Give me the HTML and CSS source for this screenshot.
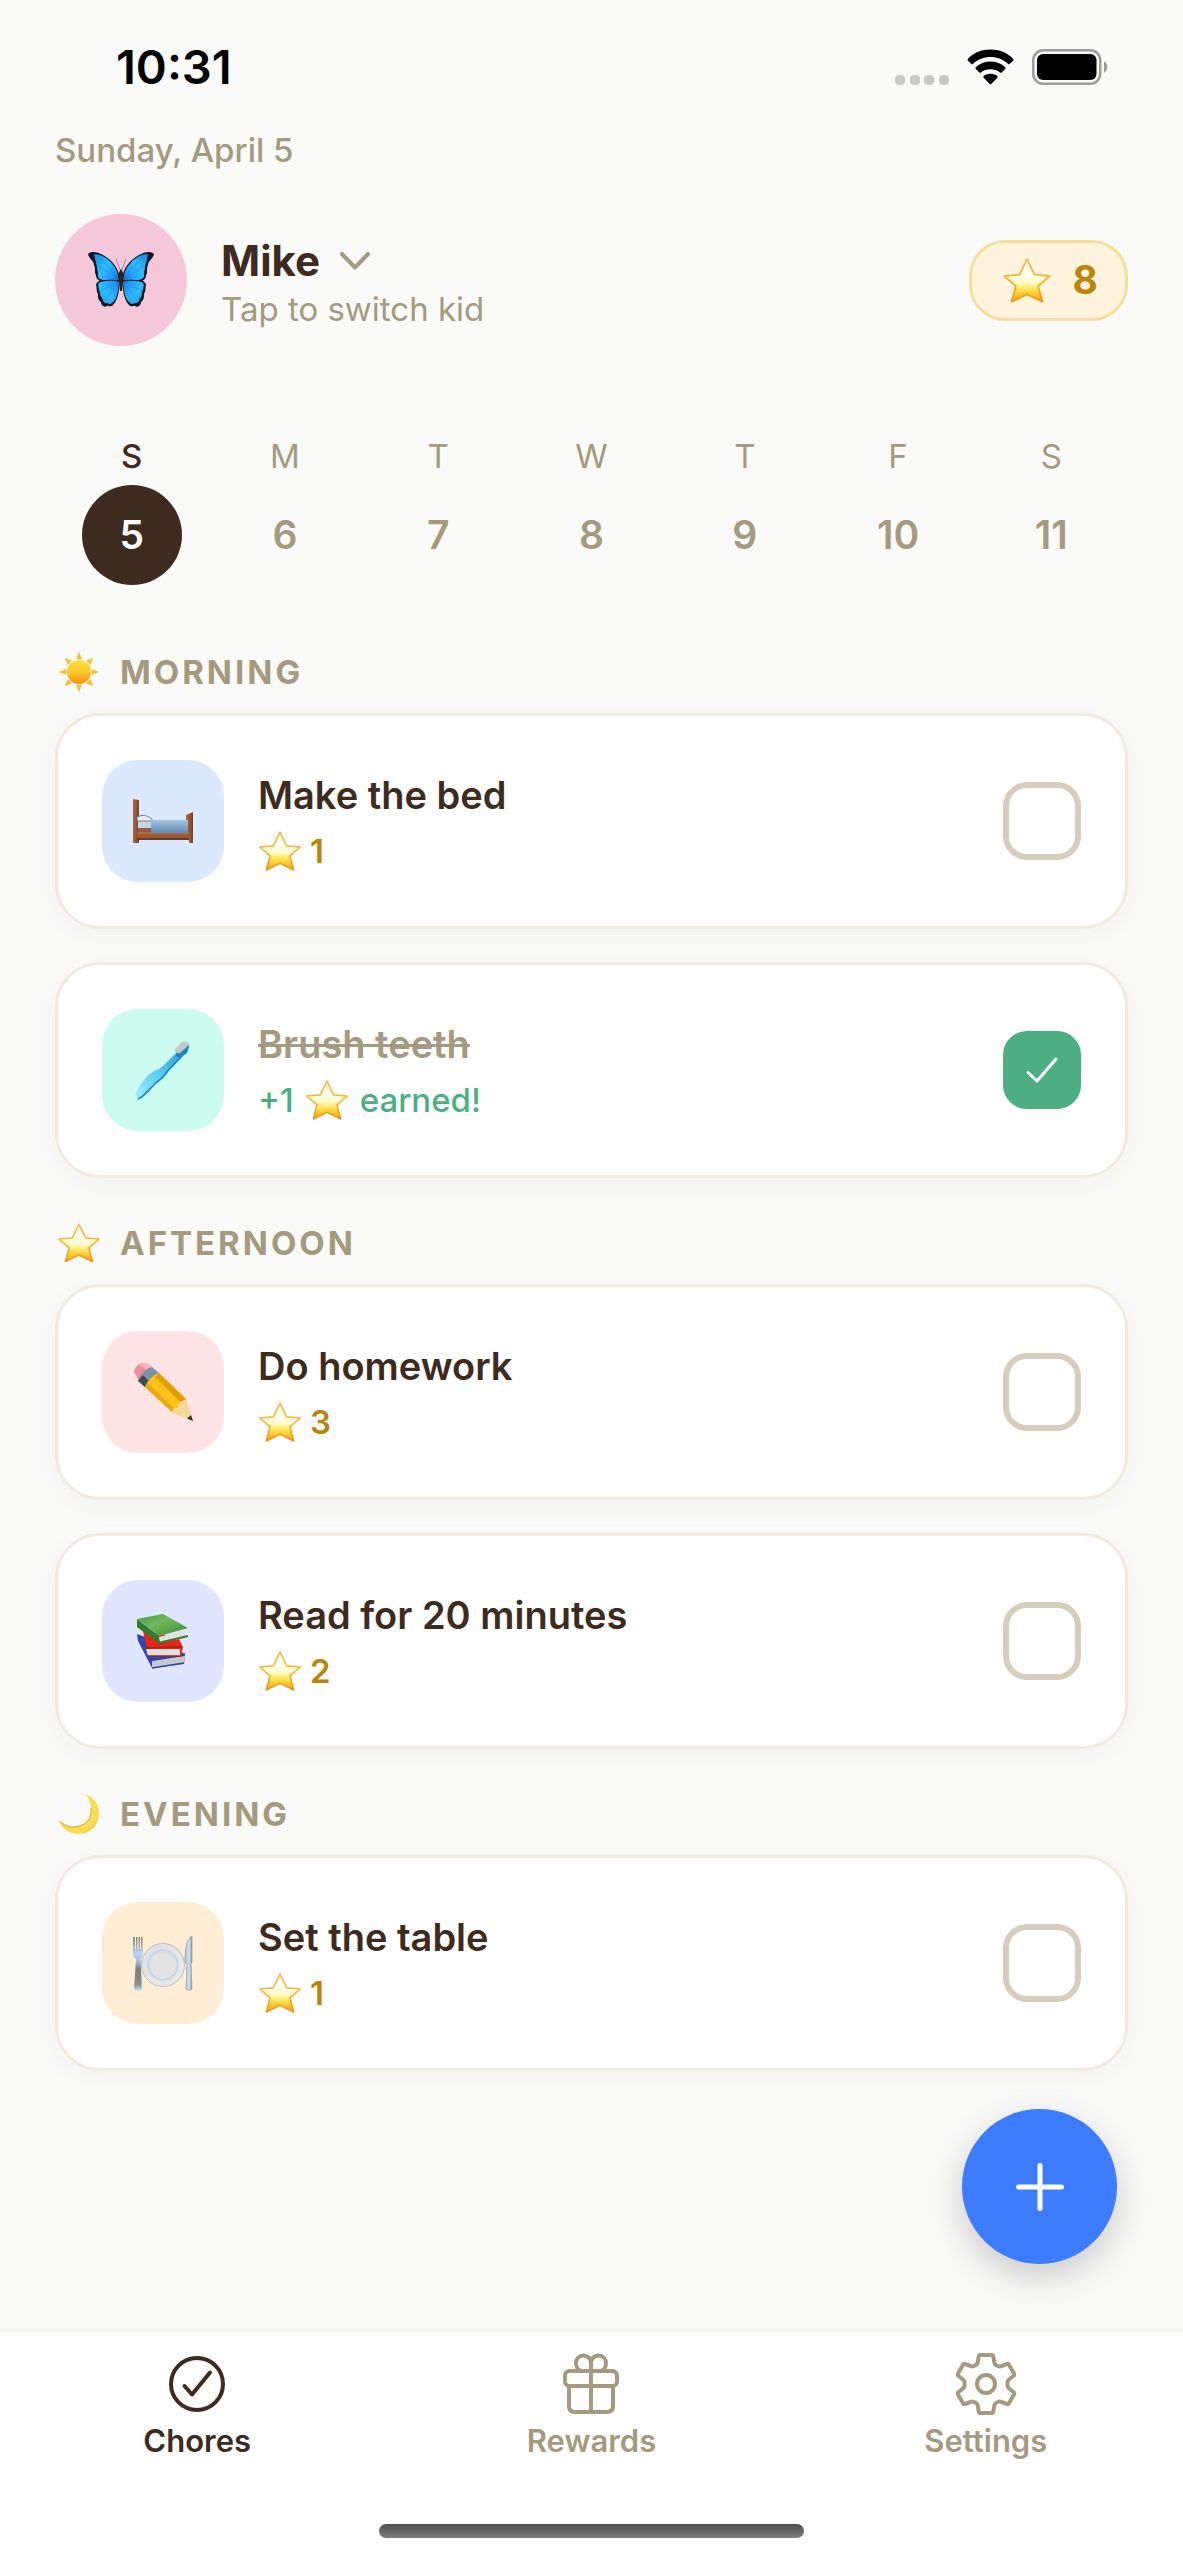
FILE: index.html
```html
<!DOCTYPE html>
<html lang="en">
<head>
<meta charset="utf-8">
<meta name="viewport" content="width=device-width, initial-scale=1">
<title>Chores</title>
<link rel="stylesheet" href="styles.css">
</head>
<body>
<svg class="sprite" aria-hidden="true">
  <defs>
    <linearGradient id="starFill" x1="0" y1="0" x2="0" y2="1">
      <stop offset="0" stop-color="#fffbe0"/><stop offset=".35" stop-color="#fffff0"/><stop offset=".55" stop-color="#fffbc4"/><stop offset=".75" stop-color="#fcdc3c"/><stop offset="1" stop-color="#f39a14"/>
    </linearGradient>
    <linearGradient id="starEdge" x1="0" y1="0" x2="0" y2="1">
      <stop offset="0" stop-color="#f9b84c"/><stop offset=".5" stop-color="#f5b63a"/><stop offset="1" stop-color="#e8961c"/>
    </linearGradient>
    <linearGradient id="sunFill" x1="0" y1="0" x2="0" y2="1">
      <stop offset="0" stop-color="#ffe23d"/><stop offset=".5" stop-color="#fcc62a"/><stop offset="1" stop-color="#f3930f"/>
    </linearGradient>
    <linearGradient id="moonFill" x1="0" y1="0" x2="1" y2="1">
      <stop offset=".4" stop-color="#f9d84a"/><stop offset=".75" stop-color="#fbdd58"/><stop offset="1" stop-color="#eab52c"/>
    </linearGradient>
    <radialGradient id="wingFill" gradientUnits="userSpaceOnUse" cx="32" cy="27" r="34">
      <stop offset="0" stop-color="#0f5cb8"/><stop offset=".2" stop-color="#1f96f2"/><stop offset=".6" stop-color="#2fbcff"/><stop offset="1" stop-color="#1c8fe6"/>
    </radialGradient>
    <linearGradient id="blanket" x1="0" y1="0" x2="0" y2="1">
      <stop offset="0" stop-color="#a4c4e2"/><stop offset="1" stop-color="#5f8ab4"/>
    </linearGradient>
    <linearGradient id="wood" x1="0" y1="0" x2="1" y2="0">
      <stop offset="0" stop-color="#b06b45"/><stop offset="1" stop-color="#7c4025"/>
    </linearGradient>
    <linearGradient id="brush" x1="0" y1="1" x2="1" y2="0">
      <stop offset="0" stop-color="#a9eefb"/><stop offset=".5" stop-color="#5fcdf0"/><stop offset="1" stop-color="#2e9fd6"/>
    </linearGradient>
    <linearGradient id="greenCover" x1="0" y1="0" x2="1" y2="1">
      <stop offset="0" stop-color="#3f9a3c"/><stop offset=".4" stop-color="#72b860"/><stop offset="1" stop-color="#388a30"/>
    </linearGradient>
    <linearGradient id="steel" x1="0" y1="0" x2="0" y2="1">
      <stop offset="0" stop-color="#8b8178"/><stop offset=".3" stop-color="#b9d3f0"/><stop offset=".45" stop-color="#a9bfd8"/><stop offset=".6" stop-color="#7c7c7e"/><stop offset=".88" stop-color="#8d8f92"/><stop offset="1" stop-color="#c4dcf4"/>
    </linearGradient>
    <linearGradient id="knife" x1="0" y1="0" x2="1" y2="0">
      <stop offset="0" stop-color="#a9bfd4"/><stop offset=".6" stop-color="#d3e2f0"/><stop offset="1" stop-color="#8f9396"/>
    </linearGradient>
    <linearGradient id="plate" x1="0" y1="0" x2="1" y2="1">
      <stop offset="0" stop-color="#dfe0e2"/><stop offset="1" stop-color="#e9eaeb"/>
    </linearGradient>
  </defs>
  <symbol id="star" viewBox="0 0 48 45">
    <path d="M24 1.200L31.500 16.700 46.800 18 35.200 28 39.400 43.800 24 36.400 8.600 43.800 12.800 28 1.200 18 16.500 16.700Z" fill="url(#starFill)" stroke="url(#starEdge)" stroke-width="1.800" stroke-linejoin="round"/>
  </symbol>
  <symbol id="sun" viewBox="0 0 40 40">
    <g fill="#fbbd2c">
      <path id="ray" d="M20 0l3 7h-6z"/>
      <use href="#ray" transform="rotate(45 20 20)"/><use href="#ray" transform="rotate(90 20 20)"/>
      <use href="#ray" transform="rotate(135 20 20)"/><use href="#ray" transform="rotate(180 20 20)"/>
      <use href="#ray" transform="rotate(225 20 20)"/><use href="#ray" transform="rotate(270 20 20)"/>
      <use href="#ray" transform="rotate(315 20 20)"/>
    </g>
    <circle cx="20" cy="20" r="12" fill="url(#sunFill)"/>
  </symbol>
  <symbol id="moon" viewBox="0 0 40 40">
    <path d="M26 0C36 4 41 12 40 21 39 33 30 40 20 40 11 40 3 35 0 27 6 32 13 34 20 32 28 30 33 24 32 14 32 8 30 4 26 0Z" fill="url(#moonFill)"/>
    <path d="M0.500 27C7 33 13 34 20 32 28 30 33 24 32 14" fill="none" stroke="#d9a93a" stroke-width="1"/>
  </symbol>
  <symbol id="butterfly" viewBox="0 0 66 56">
    <g id="wing">
      <path d="M0 2C3-1 9 0 13 2 22 6 29 14 31 22L32 29C25 31 17 30 12 29 9 27 8 26 8 23 6 20 8 17 6 13 6 9 1 7 0 2Z" fill="#0e1622"/>
      <path d="M6 2C13 2 20 6 25 13 29 18 30 22 31 28 24 29 17 29 12 27 9 25 10 23 10 21 9 17 9 14 8 11 7 8 7 5 6 2Z" fill="url(#wingFill)"/>
      <path d="M12 28C18 28 26 27 32 29L31 38C30 45 28 50 25 53 22 56 20 53 19 54 16 56 13 53 13 50 10 48 10 45 10 42 8 39 9 36 8 33 8 31 10 30 12 28Z" fill="#0e1622"/>
      <path d="M12 30C18 29 26 28 31 30L30 38C29 44 27 49 24 51 22 53 20 51 18 51 15 51 15 48 14 46 12 44 12 42 12 40 10 37 11 35 10 33 10 32 11 31 12 30Z" fill="url(#wingFill)"/>
      <path d="M31 27L11 5M31 27L10 14M31 27L12 24M31 30L12 39M31 30L17 48M31 31L23 51" stroke="#1278d0" stroke-width=".6" opacity=".6"/>
    </g>
    <use href="#wing" transform="matrix(-1 0 0 1 66 0)"/>
    <path d="M33 20L28 7M33 20L38 7" stroke="#6c5560" stroke-width=".6" fill="none"/>
    <path d="M33 17C35 19 36 24 35 29L34 39H32L31 29C30 24 31 19 33 17Z" fill="#33201a"/>
  </symbol>
  <symbol id="bed" viewBox="0 0 62 62">
    <path d="M1 9L7 10V53H1Z" fill="url(#wood)"/>
    <path d="M54 25L61 22V53H57V48H54Z" fill="url(#wood)"/>
    <path d="M6 38H57V48H6Z" fill="#9b5a38"/>
    <path d="M6 43H57" stroke="#c07a50" stroke-width="1"/>
    <path d="M5 48H57V50H5Z" fill="#6e3820"/>
    <rect x="6" y="30" width="14" height="8" fill="#c3d6e8"/>
    <path d="M5 27Q13 23 20 29V31H5Z" fill="#e9eef4" stroke="#5d6b78" stroke-width=".8"/>
    <rect x="19" y="30" width="37" height="13" fill="url(#blanket)"/>
  </symbol>
  <symbol id="toothbrush" viewBox="0 0 62 62">
    <path d="M4 58C2 54 12 39 19 34 24 31 28 30 32 26L45 13 50 17 40 29C35 32 34 37 29 41 22 45 18 51 12 57 9 60 5 61 4 58Z" fill="url(#brush)"/>
    <path d="M6 60C12 58 17 50 25 43 29 40 32 38 35 33 38 28 43 25 50 17" stroke="#1784c2" stroke-width="1.600" fill="none"/>
    <path d="M44 12L51 5C54 3 58 4 57 8L55 14 48 19 44 17Z" fill="#1688c6"/>
    <path d="M43 10L49 4C53 1 57 3 57 6L48 14C45 15 42 13 43 10Z" fill="#c3c7cb"/>
  </symbol>
  <symbol id="pencil" viewBox="0 0 62 62">
    <path d="M2 11C2 6 9 1 14 2L20 6 7 20Z" fill="#f08d98"/>
    <path d="M14 2C17 2 19 4 20 6L17 10C13 8 9 5 8 4 10 2 12 2 14 2Z" fill="#f7b6bb"/>
    <path d="M20 6L27 12 13 26 6 20C6 16 14 7 20 6Z" fill="#7c93ab"/>
    <path d="M6 20L11 14 18 21 13 26Z" fill="#45484c"/>
    <path d="M27 12L54 38 41 52 13 26C15 20 21 14 27 12Z" fill="#fcc419"/>
    <path d="M27 12L54 38 50 43 23 16Z" fill="#dfa006"/>
    <path d="M13 26L41 52 43 48 16 22Z" fill="#e9a913"/>
    <path d="M54 38L61 60 40 52C40 48 43 46 46 47 45 42 49 41 54 38Z" fill="#f6d79a"/>
    <path d="M61 60L55 57.500 59 54Z" fill="#33363a"/>
  </symbol>
  <symbol id="books" viewBox="0 0 62 62">
    <path d="M5 24L38 36 53 44 52 54 20 58 6 31Z" fill="#2b49b4"/>
    <path d="M20 51L53 46 52 54 20 58Z" fill="#c6c8cd"/>
    <path d="M20 50L53 44M20 58L52 53" stroke="#2b46a8" stroke-width="1.600"/>
    <path d="M11 21L46 27 51 37 49 46 16 45Z" fill="#e62417"/>
    <path d="M14 39H48V46H16Z" fill="#dfdfdf"/>
    <path d="M13 38L50 37M15 46L49 46" stroke="#b01c12" stroke-width="1.400"/>
    <path d="M5 9L27 26 28 34 5 17Z" fill="#2f7e2b"/>
    <path d="M27 27L54 20V28L28 32Z" fill="#e2e3e0"/>
    <path d="M5 9L31 4 56 18 27 26Z" fill="url(#greenCover)"/>
    <path d="M26 33L56 26" stroke="#2f7e2b" stroke-width="1.800"/>
  </symbol>
  <symbol id="table" viewBox="0 0 62 62">
    <path d="M1 5H3V17H4V5H5.500V17H6.500V5H8V17H9V5H10.500L11 22Q10 25 8.500 27L10 57Q6 60 2 57L4 27Q1 25 1 22Z" fill="url(#steel)"/>
    <circle cx="31" cy="33" r="21.500" fill="url(#plate)" stroke="#b9bdc2" stroke-width="1"/>
    <circle cx="31" cy="33" r="15" fill="#d8dde3" stroke="#c3d3e6" stroke-width="1.400"/>
    <circle cx="31" cy="33.500" r="13" fill="#e3e3e3"/>
    <path d="M60 4C54 7 53 18 53 30L55 33 54 57Q57 60 60 57L59 32 60 30Z" fill="url(#knife)" stroke="#8f9aa5" stroke-width=".7"/>
  </symbol>
</svg>

<header class="status-bar">
  <time class="status-time">10:31</time>
  <div class="status-icons">
    <svg class="cell" viewBox="0 0 54 10" fill="#c9c9c7"><rect width="10" height="10" rx="4"/><rect x="15" width="10" height="10" rx="4"/><rect x="29" width="10" height="10" rx="4"/><rect x="44" width="10" height="10" rx="4"/></svg>
    <svg class="wifi" viewBox="0 0 48 36"><path d="M24 0C33 0 41 3 47 9.500Q48 10.500 47 11.500L43.500 15Q42.800 15.500 42 15C37 10 31 7.800 24 7.800S11 10 6 15Q5.200 15.500 4.500 15L1 11.500Q0 10.500 1 9.500C7 3 15 0 24 0ZM24 12.500C30 12.500 35 14.500 39 18.300Q39.800 19.200 39 20L35.400 23.600Q34.600 24.300 33.800 23.600C31 21.300 28 20.200 24 20.200S17 21.300 14.200 23.600Q13.400 24.300 12.600 23.600L9 20Q8.200 19.200 9 18.300C13 14.500 18 12.500 24 12.500ZM24 25C27 25 29.500 26 31 27.300Q31.700 28.200 31 29L24.800 35.300Q24 36 23.200 35.300L17 29Q16.300 28.200 17 27.300C18.500 26 21 25 24 25Z"/></svg>
    <svg class="battery" viewBox="0 0 76 36"><rect x="1.250" y="1.250" width="67" height="33.500" rx="10" fill="none" stroke="#9c9c9a" stroke-width="2.500"/><rect x="5" y="5" width="59.500" height="26" rx="6"/><path d="M72 12.500C76.500 14 76.500 22 72 23.500Z" fill="#9c9c9a"/></svg>
  </div>
</header>

<main class="content">
  <p class="date">Sunday, April 5</p>

  <div class="profile">
    <button class="kid" type="button">
      <span class="avatar"><svg class="avatar-art"><use href="#butterfly"/></svg></span>
      <span class="kid-text">
        <span class="kid-name">Mike
          <svg class="chevron" viewBox="0 0 30 18"><path d="M2 2L15 15.500 28 2"/></svg>
        </span>
        <span class="kid-hint">Tap to switch kid</span>
      </span>
    </button>
    <div class="points"><svg class="points-star"><use href="#star"/></svg><span>8</span></div>
  </div>

  <nav class="week" aria-label="Week">
    <button class="day is-today" type="button"><span>S</span><b>5</b></button>
    <button class="day" type="button"><span>M</span><b>6</b></button>
    <button class="day" type="button"><span>T</span><b>7</b></button>
    <button class="day" type="button"><span>W</span><b>8</b></button>
    <button class="day" type="button"><span>T</span><b>9</b></button>
    <button class="day" type="button"><span>F</span><b>10</b></button>
    <button class="day" type="button"><span>S</span><b>11</b></button>
  </nav>

  <section class="period">
    <h2 class="period-title"><svg><use href="#sun"/></svg>MORNING</h2>
    <ul class="chores">
      <li class="chore">
        <span class="tile blue"><svg><use href="#bed"/></svg></span>
        <span class="chore-text">
          <label class="chore-name" for="bed-done">Make the bed</label>
          <span class="reward"><svg><use href="#star"/></svg>1</span>
        </span>
        <span class="check"><input type="checkbox" id="bed-done"><svg viewBox="0 0 78 78"><path d="M25 41.500L34 50 53 28"/></svg></span>
      </li>
      <li class="chore">
        <span class="tile mint"><svg><use href="#toothbrush"/></svg></span>
        <span class="chore-text">
          <label class="chore-name is-done" for="teeth-done">Brush teeth</label>
          <span class="reward earned">+1<svg><use href="#star"/></svg>earned!</span>
        </span>
        <span class="check"><input type="checkbox" id="teeth-done" checked><svg viewBox="0 0 78 78"><path d="M25 41.500L34 50 53 28"/></svg></span>
      </li>
    </ul>
  </section>

  <section class="period">
    <h2 class="period-title"><svg><use href="#star"/></svg>AFTERNOON</h2>
    <ul class="chores">
      <li class="chore">
        <span class="tile rose"><svg><use href="#pencil"/></svg></span>
        <span class="chore-text">
          <label class="chore-name" for="homework-done">Do homework</label>
          <span class="reward"><svg><use href="#star"/></svg>3</span>
        </span>
        <span class="check"><input type="checkbox" id="homework-done"><svg viewBox="0 0 78 78"><path d="M25 41.500L34 50 53 28"/></svg></span>
      </li>
      <li class="chore">
        <span class="tile indigo"><svg><use href="#books"/></svg></span>
        <span class="chore-text">
          <label class="chore-name" for="read-done">Read for 20 minutes</label>
          <span class="reward"><svg><use href="#star"/></svg>2</span>
        </span>
        <span class="check"><input type="checkbox" id="read-done"><svg viewBox="0 0 78 78"><path d="M25 41.500L34 50 53 28"/></svg></span>
      </li>
    </ul>
  </section>

  <section class="period">
    <h2 class="period-title"><svg><use href="#moon"/></svg>EVENING</h2>
    <ul class="chores">
      <li class="chore">
        <span class="tile peach"><svg><use href="#table"/></svg></span>
        <span class="chore-text">
          <label class="chore-name" for="table-done">Set the table</label>
          <span class="reward"><svg><use href="#star"/></svg>1</span>
        </span>
        <span class="check"><input type="checkbox" id="table-done"><svg viewBox="0 0 78 78"><path d="M25 41.500L34 50 53 28"/></svg></span>
      </li>
    </ul>
  </section>
</main>

<footer class="bottom">
  <button class="add" type="button" aria-label="Add chore"><svg viewBox="0 0 48 48"><path d="M24 2.500V45.500M2.500 24H45.500"/></svg></button>
  <nav class="tabs" aria-label="Main">
    <a class="tab is-active" href="#chores">
      <svg viewBox="0 0 64 64"><circle cx="32" cy="32" r="26"/><path d="M19.500 34L27 42.500 45 20.500"/></svg>Chores
    </a>
    <a class="tab" href="#rewards">
      <svg viewBox="0 0 64 64"><rect x="6" y="19" width="52" height="15" rx="4.500"/><path d="M10 34V54Q10 60 16 60H48Q54 60 54 54V34M32 11V60M32 19H24.500C19 19 17 15 17 11.500 17 7 20 3.500 24.500 3.500 29 3.500 32 7 32 11V19H39.500C45 19 47 15 47 11.500 47 7 44 3.500 39.500 3.500 35 3.500 32 7 32 11"/></svg>Rewards
    </a>
    <a class="tab" href="#settings">
      <svg viewBox="0 0 64 64"><circle cx="32" cy="32" r="9"/><path d="M26.500 3H37.500Q39 3 39.300 4.500L40.300 10.500Q40.700 12.500 42.500 13.300L44 14Q45.500 14.800 47.500 14L53 12Q54.300 11.600 55 12.800L60 21.500Q60.700 22.700 59.700 23.700L55 27.500Q53.500 28.700 53.500 30.300V33.700Q53.500 35.300 55 36.500L59.700 40.300Q60.700 41.300 60 42.500L55 51.200Q54.300 52.400 53 52L47.500 50Q45.500 49.200 44 50L42.500 50.700Q40.700 51.500 40.300 53.500L39.300 59.500Q39 61 37.500 61H26.500Q25 61 24.700 59.500L23.700 53.500Q23.300 51.500 21.500 50.700L20 50Q18.500 49.200 16.500 50L11 52Q9.700 52.400 9 51.200L4 42.500Q3.300 41.300 4.300 40.300L9 36.500Q10.500 35.300 10.500 33.700V30.300Q10.500 28.700 9 27.500L4.300 23.700Q3.300 22.700 4 21.500L9 12.800Q9.700 11.600 11 12L16.500 14Q18.500 14.800 20 14L21.500 13.300Q23.300 12.500 23.700 10.500L24.700 4.500Q25 3 26.500 3Z"/></svg>Settings
    </a>
  </nav>
  <div class="home-indicator"></div>
</footer>
</body>
</html>
```

FILE: styles.css
```css
:root {
  --ink: #3d2b1f;
  --muted: #a39a80;
  --gold: #b8860b;
  --green: #4caf82;
  --line: #f0ebe1;
}

* { box-sizing: border-box; }

body {
  margin: 0;
  min-height: 100vh;
  display: flex;
  flex-direction: column;
  background: #fafaf8;
  color: var(--ink);
  font-family: Inter, "Liberation Sans", sans-serif;
  font-size: 33px;
  line-height: 40px;
}

button {
  border: 0;
  padding: 0;
  background: none;
  color: inherit;
  font: inherit;
}

.sprite { position: absolute; width: 0; height: 0; }

.status-bar {
  display: flex;
  justify-content: space-between;
  align-items: center;
  height: 130px;
  padding: 4px 75px 0 116px;
  color: #000;
}
.status-time { font-size: 47px; font-weight: 600; }
.status-icons { display: flex; align-items: flex-end; gap: 18px; }
.cell { width: 54px; height: 10px; }
.wifi { width: 47px; height: 36px; }
.battery { width: 76px; height: 36px; }

.content { flex: 1; padding: 0 55px; }

.date {
  margin: 0 0 44px;
  color: var(--muted);
  font-weight: 500;
}

.profile {
  display: flex;
  justify-content: space-between;
  align-items: center;
}
.kid { display: flex; align-items: center; gap: 34px; text-align: left; }
.avatar {
  display: grid;
  place-items: center;
  width: 132px;
  height: 132px;
  border-radius: 50%;
  background: #f4c8d8;
}
.avatar-art { width: 66px; height: 56px; }
.kid-text { display: flex; flex-direction: column; padding-top: 10px; line-height: 48px; }
.kid-name { display: flex; align-items: center; gap: 20px; font-size: 42px; font-weight: 700; }
.kid-hint { color: var(--muted); }
.chevron {
  width: 30px;
  height: 18px;
  fill: none;
  stroke: var(--muted);
  stroke-width: 4;
  stroke-linecap: round;
  stroke-linejoin: round;
}

.points {
  display: flex;
  align-items: center;
  gap: 22px;
  height: 81px;
  padding: 0 27px 0 31px;
  border: 3px solid #f5dfa0;
  border-radius: 36px;
  background: #fef3dd;
  color: var(--gold);
  font-size: 39px;
  font-weight: 700;
}
.points-star { width: 48px; height: 45px; }

.week {
  display: grid;
  grid-template-columns: repeat(7, 1fr);
  margin-top: 90px;
}
.day { display: flex; flex-direction: column; align-items: center; gap: 9px; color: var(--muted); }
.day b {
  display: grid;
  place-items: center;
  width: 100px;
  height: 100px;
  border-radius: 50%;
  font-size: 39px;
  font-weight: 600;
}
.is-today { color: var(--ink); font-weight: 500; }
.is-today b { background: var(--ink); color: #fff; }

.period { margin-top: 45px; }
.week + .period { margin-top: 67px; }
.period-title {
  display: flex;
  align-items: center;
  gap: 20px;
  margin: 0 0 21px;
  padding-left: 3px;
  color: var(--muted);
  font-size: 33px;
  font-weight: 700;
  letter-spacing: 3px;
}
.period-title svg { width: 42px; height: 40px; }

.chores {
  display: grid;
  gap: 33px;
  margin: 0;
  padding: 0;
  list-style: none;
}
.chore {
  display: flex;
  align-items: center;
  gap: 34px;
  min-height: 216px;
  padding: 0 44px;
  border: 3px solid var(--line);
  border-radius: 45px;
  background: #fff;
  box-shadow: 0 6px 24px rgba(0, 0, 0, .04);
}
.tile {
  display: grid;
  place-items: center;
  width: 122px;
  height: 122px;
  border-radius: 36px;
}
.tile svg { width: 62px; height: 62px; }
.blue { background: #dbe9fe; }
.mint { background: #ccfbf0; }
.rose { background: #ffe4e6; }
.indigo { background: #e0e6ff; }
.peach { background: #ffedd6; }

.chore-text {
  display: flex;
  flex: 1;
  flex-direction: column;
  gap: 8px;
  padding-top: 4px;
  line-height: 48px;
}
.chore-name { align-self: flex-start; font-size: 38px; font-weight: 600; }
.is-done { color: var(--muted); text-decoration: line-through; text-decoration-thickness: 3px; }
.reward { display: flex; align-items: center; gap: 8px; color: var(--gold); font-weight: 600; }
.reward svg { width: 44px; height: 40px; }
.earned { gap: 11px; color: var(--green); font-weight: 500; }

.check { display: grid; width: 78px; height: 78px; }
.check > * { grid-area: 1 / 1; width: 78px; height: 78px; }
.check input {
  appearance: none;
  margin: 0;
  border: 6px solid #d6cdbd;
  border-radius: 24px;
}
.check input:checked { border-color: var(--green); background: var(--green); }
.check svg {
  visibility: hidden;
  fill: none;
  stroke: #fff;
  stroke-width: 3;
  stroke-linecap: round;
  stroke-linejoin: round;
  pointer-events: none;
}
.check input:checked + svg { visibility: visible; }

.bottom {
  position: relative;
  padding: 20px 0 22px;
  border-top: 2px solid #f5f5ef;
  background: #fff;
}
.add {
  position: absolute;
  right: 66px;
  bottom: calc(100% + 68px);
  display: grid;
  place-items: center;
  width: 155px;
  height: 155px;
  border-radius: 50%;
  background: #3d7bff;
  box-shadow: 0 12px 36px rgba(0, 0, 0, .2);
}
.add svg { width: 48px; height: 48px; fill: none; stroke: #fff; stroke-width: 5; stroke-linecap: round; }

.tabs { display: grid; grid-template-columns: repeat(3, 1fr); }
.tab {
  display: flex;
  flex-direction: column;
  align-items: center;
  gap: 5px;
  color: var(--muted);
  font-size: 31px;
  font-weight: 600;
  text-decoration: none;
}
.tab svg {
  width: 64px;
  height: 64px;
  fill: none;
  stroke: currentColor;
  stroke-width: 4;
  stroke-linecap: round;
  stroke-linejoin: round;
}
.is-active { color: var(--ink); }

.home-indicator {
  width: 36%;
  height: 14px;
  margin: 63px auto 0;
  border-radius: 7px;
  background: linear-gradient(#4f4f4f, #7c7c7c);
}
```
